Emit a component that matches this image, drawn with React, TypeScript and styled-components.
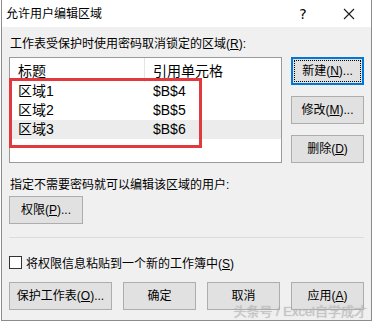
import React from 'react';
import styled, {createGlobalStyle} from 'styled-components';

const GlobalStyle = createGlobalStyle`
    html, body {
        margin: 0;
        padding: 0;
        background: #ffffff;
    }
    body {
        font-family: "Liberation Sans", "Noto Sans CJK SC", sans-serif;
        color: #000;
    }
`

const rows = [
    {title: '区域1', ref: '$B$4'},
    {title: '区域2', ref: '$B$5'},
    {title: '区域3', ref: '$B$6', selected: true},
];

export default function App() {
    return (
        <>
            <GlobalStyle/>
            <Dialog>
                <TitleBar>
                    <Title>允许用户编辑区域</Title>
                    <TitleButtons>
                        <HelpMark>?</HelpMark>
                        <CloseIcon width="12" height="12" viewBox="0 0 12 12">
                            <path d="M1 1 L11 11 M11 1 L1 11" stroke="#1a1a1a" strokeWidth="1.1" fill="none"/>
                        </CloseIcon>
                    </TitleButtons>
                </TitleBar>

                <Body>
                    <Label>工作表受保护时使用密码取消锁定的区域(<u>R</u>):</Label>
                    <TopRow>
                        <ListBox>
                            <HeaderRow>
                                <HeaderCell $width={135}>标题</HeaderCell>
                                <HeaderCell>引用单元格</HeaderCell>
                            </HeaderRow>
                            {rows.map((r) => (
                                <ListRow key={r.title} $selected={r.selected}>
                                    <Cell $width={135}>{r.title}</Cell>
                                    <Cell>{r.ref}</Cell>
                                </ListRow>
                            ))}
                            <Highlight/>
                        </ListBox>
                        <SideButtons>
                            <Button $focused>新建(<u>N</u>)...</Button>
                            <Button>修改(<u>M</u>)...</Button>
                            <Button>删除(<u>D</u>)</Button>
                        </SideButtons>
                    </TopRow>

                    <Label $top={14}>指定不需要密码就可以编辑该区域的用户:</Label>
                    <PermButton>权限(<u>P</u>)...</PermButton>

                    <Separator/>

                    <CheckRow>
                        <CheckBox/>
                        <span>将权限信息粘贴到一个新的工作簿中(<u>S</u>)</span>
                    </CheckRow>

                    <BottomRow>
                        <Button $width={103}>保护工作表(<u>O</u>)...</Button>
                        <Button>确定</Button>
                        <Button>取消</Button>
                        <Button>应用(<u>A</u>)</Button>
                    </BottomRow>
                </Body>

                <Watermark>头条号 / Excel自学成才</Watermark>
            </Dialog>
        </>
    );
}

const Dialog = styled.div`
    position: relative;
    box-sizing: border-box;
    width: 371px;
    margin-left: 1px;
    background: #f0f0f0;
    border: 1px solid #8c8c8c;
    border-top: none;
    font-size: 12px;
`

const TitleBar = styled.div`
    height: 27px;
    background: #ffffff;
    display: flex;
    align-items: center;
    justify-content: space-between;
    padding: 0 0 0 4px;
`

const Title = styled.span`
    font-size: 12px;
    line-height: 16px;
`

const TitleButtons = styled.div`
    display: flex;
    align-items: center;
    height: 100%;
`

const HelpMark = styled.span`
    width: 46px;
    text-align: center;
    font-size: 14px;
    line-height: 16px;
    font-family: "DejaVu Sans", sans-serif;
`

const CloseIcon = styled.svg`
    display: block;
    margin: 0 16px 0 17px;
`

const Body = styled.div`
    padding: 9px 6px 10px 7px;
    display: flex;
    flex-direction: column;
`

const Label = styled.div<{ $top?: number }>`
    line-height: 16px;
    height: 16px;
    padding-left: 1px;
    margin-top: ${p => p.$top ?? 0}px;
    white-space: nowrap;
`

const TopRow = styled.div`
    display: flex;
    gap: 9px;
    margin-top: 5px;
`

const ListBox = styled.div`
    position: relative;
    box-sizing: border-box;
    width: 273px;
    height: 106px;
    background: #ffffff;
    border: 1px solid #9a9a9a;
    font-size: 14px;
`

const HeaderRow = styled.div`
    display: flex;
    height: 24px;
    align-items: center;
`

const HeaderCell = styled.div<{ $width?: number }>`
    box-sizing: border-box;
    padding-left: 8px;
    width: ${p => (p.$width ? `${p.$width}px` : 'auto')};
    flex: ${p => (p.$width ? 'none' : '1')};
    height: 100%;
    display: flex;
    align-items: center;
    border-right: ${p => (p.$width ? '1px solid #e5e5e5' : 'none')};
`

const ListRow = styled.div<{ $selected?: boolean }>`
    display: flex;
    height: 19px;
    align-items: center;
    background: ${p => (p.$selected ? '#ececec' : 'transparent')};
`

const Cell = styled.div<{ $width?: number }>`
    box-sizing: border-box;
    padding-left: 8px;
    width: ${p => (p.$width ? `${p.$width}px` : 'auto')};
    flex: ${p => (p.$width ? 'none' : '1')};
    line-height: 19px;
`

const Highlight = styled.div`
    position: absolute;
    left: -1px;
    top: 20px;
    width: 193px;
    height: 70px;
    box-sizing: border-box;
    border: 3px solid #e0393e;
    pointer-events: none;
`

const SideButtons = styled.div`
    display: flex;
    flex-direction: column;
    gap: 11px;
`

const Button = styled.div<{ $focused?: boolean; $width?: number }>`
    position: relative;
    box-sizing: border-box;
    width: ${p => p.$width ?? 73}px;
    height: 28px;
    display: flex;
    align-items: center;
    justify-content: center;
    background: #e1e1e1;
    border: ${p => (p.$focused ? '2px solid #0078d7' : '1px solid #adadad')};
    font-size: 12px;
    line-height: 15px;
    white-space: nowrap;

    &::after {
        content: '';
        display: ${p => (p.$focused ? 'block' : 'none')};
        position: absolute;
        inset: 1px;
        border: 1px dotted #000;
    }
`

const PermButton = styled(Button)`
    margin-top: 3px;
    width: 74px;
`

const Separator = styled.div`
    height: 1px;
    background: #dcdcdc;
    margin: 13px 1px 0 0;
`

const CheckRow = styled.div`
    display: flex;
    align-items: center;
    gap: 4px;
    height: 16px;
    margin-top: 16px;
    white-space: nowrap;
`

const CheckBox = styled.div`
    box-sizing: border-box;
    width: 13px;
    height: 13px;
    background: #fff;
    border: 1px solid #333;
`

const BottomRow = styled.div`
    display: flex;
    justify-content: space-between;
    margin-top: 12px;
    padding-right: 1px;
`

const Watermark = styled.div`
    position: absolute;
    right: 4px;
    bottom: 1px;
    font-size: 13px;
    line-height: 14px;
    color: rgba(200, 200, 200, 0.75);
    text-shadow: 0 0 1px rgba(120, 120, 120, 0.5);
    white-space: nowrap;
    pointer-events: none;
`
